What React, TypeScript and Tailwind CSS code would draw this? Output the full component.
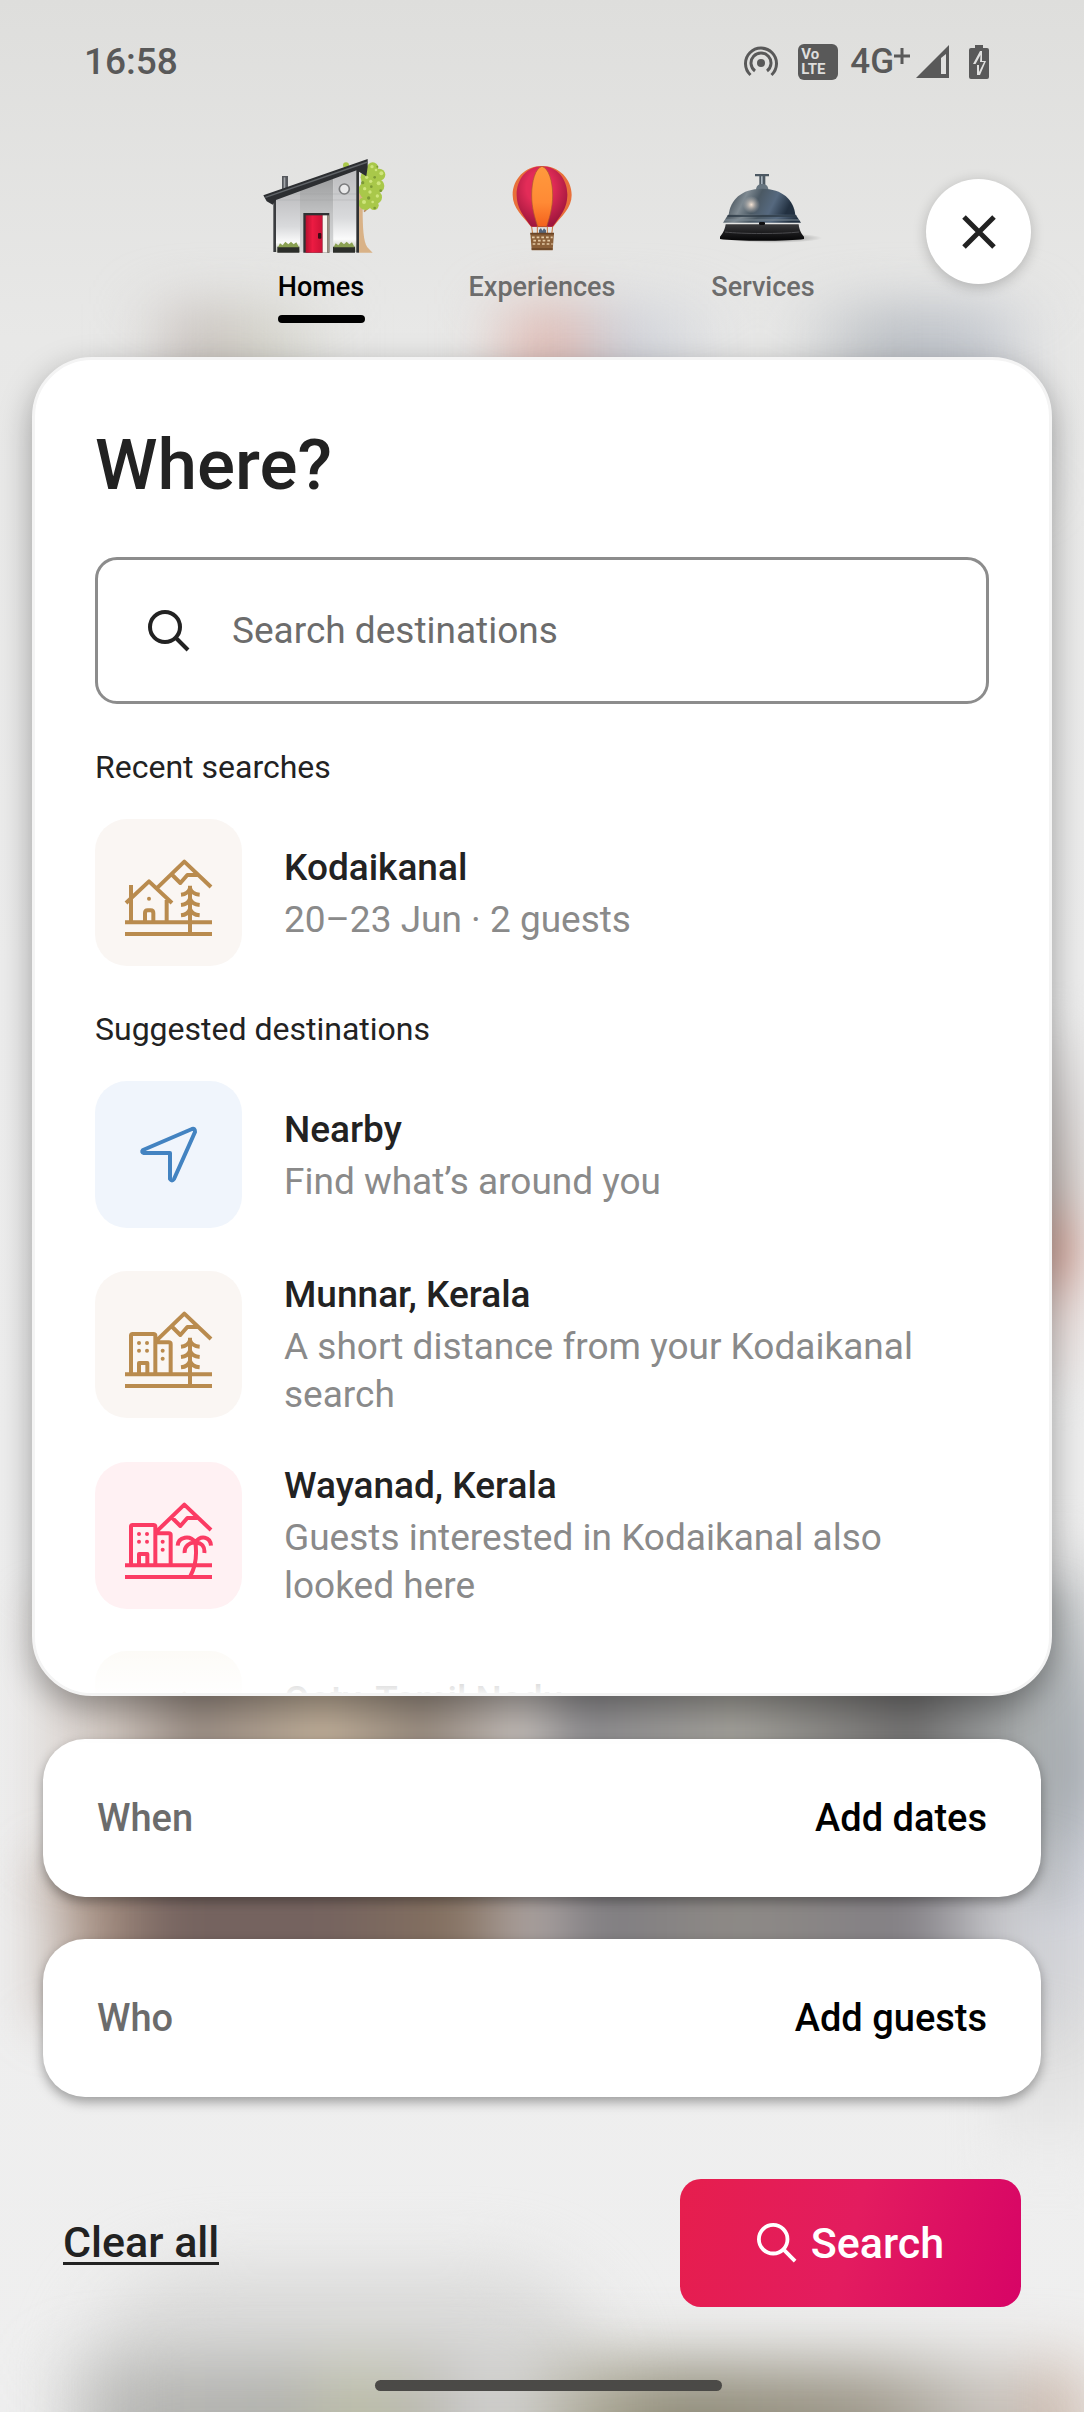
import type { ReactNode } from "react";

function HomeArt() {
  return (
    <svg viewBox="48 27 390 330" className="h-[110px] w-[130px]" aria-hidden="true">
      <defs>
        <linearGradient id="wall" x1="0" y1="0" x2="0" y2="1">
          <stop offset="0" stopColor="#b9b9bb" />
          <stop offset="0.6" stopColor="#d9dadc" />
          <stop offset="0.85" stopColor="#fbfbfb" />
          <stop offset="1" stopColor="#b9bcb0" />
        </linearGradient>
        <linearGradient id="wallMid" x1="0" y1="0" x2="0" y2="1">
          <stop offset="0" stopColor="#9a9b9c" />
          <stop offset="0.5" stopColor="#c2c3c4" />
          <stop offset="1" stopColor="#d8d9da" />
        </linearGradient>
        <linearGradient id="door" x1="0" y1="0" x2="1" y2="0">
          <stop offset="0" stopColor="#b80f2e" />
          <stop offset="0.4" stopColor="#ec1b42" />
          <stop offset="1" stopColor="#cb1236" />
        </linearGradient>
      </defs>
      <path d="M356 150h16l-4 60c0 50 2 95 14 112l16 16h-42z" fill="#d9b287" />
      <path d="M372 215l22-20" stroke="#b98d5c" strokeWidth="5" />
      <g fill="#a9c84a">
        <circle cx="318" cy="76" r="9" />
        <circle cx="398" cy="84" r="17" />
        <circle cx="418" cy="104" r="18" />
        <circle cx="388" cy="112" r="26" />
        <circle cx="412" cy="138" r="21" />
        <circle cx="382" cy="150" r="26" />
        <circle cx="406" cy="172" r="20" />
        <circle cx="376" cy="190" r="20" />
        <circle cx="402" cy="196" r="14" />
      </g>
      <g fill="#cfe57c">
        <circle cx="396" cy="80" r="5" />
        <circle cx="408" cy="90" r="4" />
        <circle cx="424" cy="100" r="6" />
        <circle cx="380" cy="112" r="5" />
        <circle cx="392" cy="124" r="5" />
        <circle cx="416" cy="130" r="6" />
        <circle cx="374" cy="146" r="5" />
        <circle cx="390" cy="156" r="5" />
        <circle cx="412" cy="168" r="5" />
        <circle cx="398" cy="186" r="4" />
        <circle cx="372" cy="186" r="6" />
      </g>
      <g fill="#7d9a35">
        <circle cx="404" cy="112" r="4" />
        <circle cx="394" cy="140" r="4" />
        <circle cx="422" cy="152" r="4" />
        <circle cx="386" cy="174" r="5" />
        <circle cx="404" cy="204" r="4" />
        <circle cx="368" cy="128" r="5" />
        <circle cx="412" cy="80" r="3" />
      </g>
      <path d="M126 108h18v42l-18 6z" fill="#55585d" />
      <path d="M131 112h5v38h-5z" fill="#a3a6aa" />
      <path d="M104 176l76-30v190h-76z" fill="url(#wall)" />
      <path d="M180 146l100-38v228H180z" fill="url(#wallMid)" />
      <path d="M280 108l74-28v256h-74z" fill="url(#wall)" />
      <path d="M110 180h240M110 162h240" stroke="#9b9c9e" strokeWidth="1.5" opacity="0.6" />
      <path d="M104 176v160" stroke="#3a3c3f" strokeWidth="8" />
      <path d="M353 84v254" stroke="#2f3133" strokeWidth="8" />
      <path d="M70 166L383 57v24l-4 28-22-14-3-6L108 180l-10 14-18-10z" fill="#2c2e31" />
      <path d="M76 172L383 66" stroke="#606468" strokeWidth="4" />
      <circle cx="313" cy="147" r="15" fill="#e9e9ea" stroke="#7b7c7e" strokeWidth="5" />
      <path d="M190 338V219h78v119" fill="#303133" />
      <path d="M197 338V226h51v112z" fill="url(#door)" />
      <path d="M248 226h14v112h-14z" fill="#f7f3ec" />
      <path d="M262 226h6v112h-6z" fill="#9a8f80" />
      <rect x="234" y="279" width="10" height="17" rx="3" fill="#3a0b14" />
      <path d="M112 320h66v18h-66zM279 320h66v18h-66z" fill="#2c2e2a" />
      <path
        d="M114 322l6-12 8 6 8-11 9 8 8-8 8 8 8-6 8 15zM281 322l6-12 8 6 8-11 9 8 8-8 8 8 8-6 8 15z"
        fill="#8aa052"
      />
    </svg>
  );
}

function BalloonArt() {
  return (
    <svg viewBox="711 27 390 330" className="h-[110px] w-[130px]" aria-hidden="true">
      <defs>
        <radialGradient id="shade" cx="0.45" cy="0.35" r="0.65">
          <stop offset="0.4" stopColor="#5a0020" stopOpacity="0" />
          <stop offset="1" stopColor="#5a0020" stopOpacity="0.5" />
        </radialGradient>
        <linearGradient id="orange" x1="0" y1="0" x2="0" y2="1">
          <stop offset="0" stopColor="#ff9a3d" />
          <stop offset="0.6" stopColor="#ff8a35" />
          <stop offset="1" stopColor="#f4611c" />
        </linearGradient>
      </defs>
      <path
        d="M906 78c52 0 89 40 89 87 0 40-30 63-55 95h-67c-25-32-55-55-55-95 0-47 37-87 88-87z"
        fill="#e8703a"
      />
      <path
        d="M906 79c45 0 76 38 76 86 0 40-22 65-44 95h-64c-22-30-44-55-44-95 0-48 31-86 76-86z"
        fill="#e32c58"
      />
      <path
        d="M906 79c45 0 76 38 76 86 0 40-22 65-44 95h-64c-22-30-44-55-44-95 0-48 31-86 76-86z"
        fill="url(#shade)"
      />
      <path
        d="M906 79c20 6 32 45 32 86 0 40-9 65-18 95h-27c-9-30-18-55-18-95 0-41 11-80 31-86z"
        fill="url(#orange)"
        stroke="#a8572c"
        strokeWidth="2"
      />
      <path d="M875 260l3 24M892 260v24M922 260v24M938 260l-3 24" stroke="#c9793c" strokeWidth="3" />
      <path d="M897 282v-12l6-6 4 8 5-7 6 6v11z" fill="#55657b" />
      <path d="M871 280h71l-4 51h-63z" fill="#8b6039" />
      <path
        d="M876 292h8m6 0h8m6 0h8m6 0h8m6 0h6M880 302h8m6 0h8m6 0h8m6 0h8M878 312h8m6 0h8m6 0h8m6 0h8m6 0h4"
        stroke="#e3c9a5"
        strokeWidth="5"
      />
      <path d="M871 281h71M875 327h63" stroke="#6a4426" strokeWidth="5" />
    </svg>
  );
}

function BellArt() {
  return (
    <svg viewBox="177 27 390 330" className="h-[110px] w-[130px]" aria-hidden="true">
      <defs>
        <linearGradient id="dome" x1="0" y1="0" x2="1" y2="0.2">
          <stop offset="0" stopColor="#2f3a44" />
          <stop offset="0.3" stopColor="#7f8a92" />
          <stop offset="0.5" stopColor="#4b5964" />
          <stop offset="0.75" stopColor="#56697f" />
          <stop offset="1" stopColor="#223040" />
        </linearGradient>
        <linearGradient id="base" x1="0" y1="0" x2="0" y2="1">
          <stop offset="0" stopColor="#3a3a3c" />
          <stop offset="0.5" stopColor="#1c1c1e" />
          <stop offset="1" stopColor="#050506" />
        </linearGradient>
        <radialGradient id="glint">
          <stop offset="0" stopColor="#f5e3d3" />
          <stop offset="1" stopColor="#b9b6b5" stopOpacity="0" />
        </radialGradient>
        <radialGradient id="cast">
          <stop offset="0" stopColor="#000" stopOpacity="0.5" />
          <stop offset="1" stopColor="#000" stopOpacity="0" />
        </radialGradient>
      </defs>
      <ellipse cx="400" cy="294" rx="150" ry="15" fill="url(#cast)" />
      <path d="M348 102h42v7h-11v28h-18v-28h-13z" fill="#4c5862" />
      <path d="M366 109h5v26h-5z" fill="#a8b4bd" />
      <path d="M351 150c0-12 8-18 19-18s18 6 18 18z" fill="#66747f" />
      <path d="M369 146c62 0 96 34 100 80H269c4-46 38-80 100-80z" fill="url(#dome)" />
      <circle cx="337" cy="194" r="26" fill="url(#glint)" />
      <path d="M267 224h203l16 24H252z" fill="url(#dome)" />
      <path d="M266 228h206" stroke="#2e3b47" strokeWidth="4" />
      <path d="M258 240h222" stroke="#7f8c96" strokeWidth="3" />
      <path d="M260 253h219c2 18 8 28 16 37v7c-40 7-210 7-252 0v-7c8-9 14-19 17-37z" fill="url(#base)" />
      <path d="M258 276c50 6 170 6 222 0" stroke="#4b4b4e" strokeWidth="3" fill="none" />
      <rect x="360" y="246" width="18" height="9" rx="3" fill="#0e0e10" />
    </svg>
  );
}

function Magnifier({ className }: { className: string }) {
  return (
    <svg viewBox="0 0 42 42" className={className} fill="none" stroke="currentColor" strokeWidth="4" aria-hidden="true">
      <circle cx="17" cy="17" r="15" />
      <path d="M28 28l12 12" />
    </svg>
  );
}

const GROUND = "M105 322H366M105 357H366";
const MOUNTAIN = "M200 220L283 140L363 216M247 180L271 204L292 180H322";
const PINE =
  "M300 212V357M273 239Q294 237 300 220Q306 237 329 239M273 270Q294 268 300 251Q306 268 329 270M273 301Q294 299 300 282Q306 299 329 301";
const PALM =
  "M300 356C316 328 322 296 316 253M263 263C265 236 300 230 316 253C332 230 361 236 363 263M284 285C282 265 300 252 316 254C335 253 345 266 343 285";
const HOUSE = "M108 264L177 199L246 264M123 210V322M230 255V322M165 322V294Q165 286 173 286H182Q190 286 190 294V322";
const TOWERS =
  "M123 322V206Q123 201 128 201H190Q196 201 196 206V322M196 226H236Q242 226 242 231V322M147 322V288H172V322";

function Landmark({ lines, dots, color }: { lines: string; dots: number[][]; color: string }) {
  return (
    <svg viewBox="15 12 441 441" className="size-full" fill="none" aria-hidden="true">
      <path d={lines} stroke={color} strokeWidth="12" strokeLinejoin="round" />
      {dots.map(([x, y]) => (
        <circle key={`${x}-${y}`} cx={x} cy={y} r="6" fill={color} />
      ))}
    </svg>
  );
}

const TOWER_DOTS = [
  [147, 228],
  [171, 228],
  [147, 251],
  [171, 251],
  [218, 251],
  [218, 275],
];

function NearbyIcon() {
  return (
    <svg viewBox="0 0 147 147" className="size-full" fill="none" aria-hidden="true">
      <path
        d="M97 48L48 69Q46 71 49 72H75V98Q77 101 79 98L100 51Q100 47 97 48Z"
        stroke="#4383c1"
        strokeWidth="4"
        strokeLinejoin="round"
      />
    </svg>
  );
}

type Place = { title: string; note: string; tile: string; icon: ReactNode };

const recent: Place[] = [
  {
    title: "Kodaikanal",
    note: "20–23 Jun · 2 guests",
    tile: "bg-[#faf6f3]",
    icon: <Landmark lines={GROUND + MOUNTAIN + PINE + HOUSE} dots={[[177, 251]]} color="#b98b4e" />,
  },
];

const suggested: Place[] = [
  { title: "Nearby", note: "Find what’s around you", tile: "bg-[#f0f5fc]", icon: <NearbyIcon /> },
  {
    title: "Munnar, Kerala",
    note: "A short distance from your Kodaikanal search",
    tile: "bg-[#faf6f3]",
    icon: <Landmark lines={GROUND + MOUNTAIN + PINE + TOWERS} dots={TOWER_DOTS} color="#b98b4e" />,
  },
  {
    title: "Wayanad, Kerala",
    note: "Guests interested in Kodaikanal also looked here",
    tile: "bg-[#fff1f3]",
    icon: <Landmark lines={GROUND + MOUNTAIN + PALM + TOWERS} dots={TOWER_DOTS} color="#fb3b63" />,
  },
  {
    title: "Ooty, Tamil Nadu",
    note: "For nature lovers",
    tile: "bg-[#faf7f0]",
    icon: <Landmark lines={GROUND + MOUNTAIN + PINE + HOUSE} dots={[[177, 251]]} color="#b98b4e" />,
  },
];

function PlaceList({ heading, places }: { heading: string; places: Place[] }) {
  return (
    <section className="mt-[43px]">
      <h2 className="text-[32px] leading-10 text-[#222222]">{heading}</h2>
      <ul className="mt-8 flex flex-col gap-[41px]">
        {places.map((p) => (
          <li key={p.title}>
            <button type="button" className="flex w-full items-center gap-[42px] text-left text-[37px] leading-[48px]">
              <span className={`size-[147px] shrink-0 rounded-[32px] ${p.tile}`}>{p.icon}</span>
              <span className="flex min-w-0 flex-col gap-1 pt-[2px]">
                <span className="font-medium text-[#222222]">{p.title}</span>
                <span className="text-[#8a8a8a]">{p.note}</span>
              </span>
            </button>
          </li>
        ))}
      </ul>
    </section>
  );
}

function StatusBar() {
  return (
    <div className="flex h-[124px] shrink-0 items-center justify-between pr-[95px] pl-[84px] text-[#595959]">
      <time className="text-[37px] font-medium">16:58</time>
      <div className="flex items-center">
        <svg viewBox="0 0 34 34" className="mr-[20px] size-[34px]" fill="none" stroke="currentColor" strokeWidth="3" aria-label="Hotspot">
          <circle cx="17" cy="18" r="4" fill="currentColor" stroke="none" />
          <path d="M11 26a10 10 0 1 1 12 0M6.500 30a15.500 15.500 0 1 1 21 0" />
        </svg>
        <span className="mr-3 flex h-9 w-10 flex-col justify-center rounded-md bg-[#595959] pl-[3px] text-[15px] leading-[15px] font-bold text-[#dededd]">
          <span>Vo</span>
          <span>LTE</span>
        </span>
        <span className="text-[35px] leading-9 font-medium">4G</span>
        <svg viewBox="0 0 16 36" className="mr-[6px] h-9 w-4" stroke="currentColor" strokeWidth="3" aria-hidden="true">
          <path d="M0 12H16M8 4V20" />
        </svg>
        <svg viewBox="0 0 34 34" className="mr-[19px] size-[34px]" aria-label="Signal">
          <path d="M33 0V33H0Z" fill="currentColor" />
          <path d="M25 13l5-4V29H25z" fill="#e0e0df" />
        </svg>
        <svg viewBox="0 0 20 34" className="h-[34px] w-5" aria-label="Charging">
          <path d="M6 0h8v3h4q2 0 2 2v27q0 2-2 2H2q-2 0-2-2V5q0-2 2-2h4z" fill="currentColor" />
          <path d="M11 6L4 19h4v11h3l6-14h-4V6z" fill="#e0e0df" />
          <path d="M11.500 10L6 20h4v7l5-10h-4z" fill="currentColor" />
        </svg>
      </div>
    </div>
  );
}

/* Out-of-focus listing photos behind the search sheet. */
function Backdrop() {
  return (
    <div className="absolute inset-0 -z-10 overflow-hidden bg-[linear-gradient(#dededc,#e8e8e7_14%,#ececec_40%,#efefef)]" aria-hidden="true">
      <div className="absolute inset-x-0 top-[12.6%] h-[8%] bg-[linear-gradient(90deg,transparent_12%,#c9c2be_18%,#d3d2c9_24%,transparent_32%,transparent_44%,#dfbdb7_49%,#dfbdb7_52%,#cccfd7_57%,transparent_68%,transparent_72%,#bbbfc4_82%,#c3c7ce_90%,transparent_97%)] blur-[26px]" />
      <div className="absolute top-[42%] right-0 h-[16%] w-[60px] bg-[linear-gradient(#eaeaea,#d2cecd_25%,#c9bfbb_45%,#cfa59b_62%,#e4d6d3_78%,#ebebeb)] blur-[16px]" />
      <div className="absolute top-[64%] -right-5 h-[26%] w-[110px] bg-[linear-gradient(#e4e4e4,#b0b5ba_25%,#a9aeb5_38%,#cfd2dc_55%,#d5d6da_66%,#dedede_80%,#eeeeee)] blur-[20px]" />
      <div className="absolute inset-x-0 top-[66%] h-[13%] bg-[linear-gradient(90deg,transparent_1%,#cfc5be_10%,#988b82_18%,#bdac97_30%,#96897d_39%,#c0bab6_48%,#8b8a8d_54%,#a19f99_68%,#706f6f_84%,#a9adae_95%,transparent)] blur-[16px]" />
      <div className="absolute inset-x-0 top-[77%] h-[7%] bg-[linear-gradient(90deg,transparent_2%,#a58e80_9%,#75635f_16%,#75635f_30%,#857160_42%,#b0a7a5_49%,#7f7d81_55%,#8e8a86_68%,#827f84_84%,#cccdd1_93%,transparent)] blur-[24px]" />
      <div className="absolute top-[94%] left-[8%] h-[10%] w-[48%] rounded-full bg-[#dadad9] blur-[34px]" />
      <div className="absolute inset-x-0 top-[98%] h-[8%] bg-[linear-gradient(90deg,transparent_4%,#b5b5b2_12%,#b0b0ac_26%,#bec0a6_34%,#b5b3ad_39%,#d6d6d6_46%,#a5a18d_56%,#8f8b78_62%,#9d9789_80%,#c9c5c0_92%,#cbb09f)] blur-[32px]" />
    </div>
  );
}

const tabs = [
  { label: "Homes", art: <HomeArt />, active: true },
  { label: "Experiences", art: <BalloonArt />, active: false },
  { label: "Services", art: <BellArt />, active: false },
];

const steps = [
  { label: "When", action: "Add dates" },
  { label: "Who", action: "Add guests" },
];

export default function App() {
  return (
    <main className="relative isolate flex h-screen flex-col font-['Roboto',sans-serif]">
      <Backdrop />
      <StatusBar />

      <header className="grid shrink-0 grid-cols-[1fr_auto_1fr] pt-[25px] pb-[34px]">
        <nav className="col-start-2 grid grid-cols-[221px_221px_221px]">
          {tabs.map((t) => (
            <a
              key={t.label}
              href={`#${t.label.toLowerCase()}`}
              aria-current={t.active ? "page" : undefined}
              className="flex flex-col items-center gap-[10px]"
            >
              {t.art}
              <span
                className={
                  t.active
                    ? "text-[27px] leading-9 font-medium text-black"
                    : "text-[27px] leading-9 font-medium text-[#6c6c6c]"
                }
              >
                {t.label}
              </span>
              {t.active && <span className="h-2 w-[87px] rounded-full bg-black" />}
            </a>
          ))}
        </nav>
        <button
          type="button"
          aria-label="Close"
          className="mt-[30px] mr-[53px] flex size-[105px] items-center justify-center self-start justify-self-end rounded-full bg-white shadow-[0_3px_14px_rgba(0,0,0,0.22)]"
        >
          <svg viewBox="0 0 34 34" className="size-[34px]" stroke="#222222" strokeWidth="5" aria-hidden="true">
            <path d="M2 2L32 32M32 2L2 32" />
          </svg>
        </button>
      </header>

      <section className="relative mx-8 min-h-0 flex-1 overflow-hidden rounded-[60px] border-[3px] border-[#f4f4f4] bg-white px-[60px] pt-[63px] shadow-[0_12px_32px_rgba(0,0,0,0.34)]">
        <h1 className="text-[71px] leading-[84px] font-medium text-[#222222]">Where?</h1>
        <label className="mt-[50px] flex h-[147px] items-center gap-[42px] rounded-[22px] border-[3px] border-[#8c8c8c] pr-8 pl-[50px]">
          <Magnifier className="size-[42px] shrink-0 text-[#222222]" />
          <input
            type="text"
            aria-label="Search destinations"
            placeholder="Search destinations"
            className="min-w-0 flex-1 bg-transparent text-[37px] leading-[48px] text-[#222222] outline-none placeholder:text-[#6c6c6c]"
          />
        </label>
        <PlaceList heading="Recent searches" places={recent} />
        <PlaceList heading="Suggested destinations" places={suggested} />
        <div className="pointer-events-none absolute inset-x-0 bottom-0 h-[86px] bg-linear-to-b from-white/0 to-white/95" />
      </section>

      <div className="mx-[43px] mt-[43px] flex shrink-0 flex-col gap-[42px]">
        {steps.map((s) => (
          <button
            key={s.label}
            type="button"
            className="flex h-[158px] items-center justify-between rounded-[42px] bg-white px-[54px] text-[38px] leading-[48px] font-medium shadow-[0_5px_12px_rgba(0,0,0,0.35)]"
          >
            <span className="text-[#6c6c6c]">{s.label}</span>
            <span className="text-black">{s.action}</span>
          </button>
        ))}
      </div>

      <footer className="mt-[82px] flex shrink-0 items-center justify-between px-[63px]">
        <button type="button" className="border-b-[3px] border-[#222222] text-[43px] leading-10 font-medium text-[#222222]">
          Clear all
        </button>
        <button
          type="button"
          className="flex h-32 w-[341px] items-center justify-center gap-[14px] rounded-[21px] bg-[linear-gradient(105deg,#e61e4d,#e31c5f_50%,#d70466)] text-[43px] font-medium text-white"
        >
          <Magnifier className="size-10" />
          Search
        </button>
      </footer>
      <div className="mt-[73px] mb-[21px] ml-3 h-[11px] w-[347px] shrink-0 self-center rounded-full bg-[#4b4a47]" />
    </main>
  );
}
